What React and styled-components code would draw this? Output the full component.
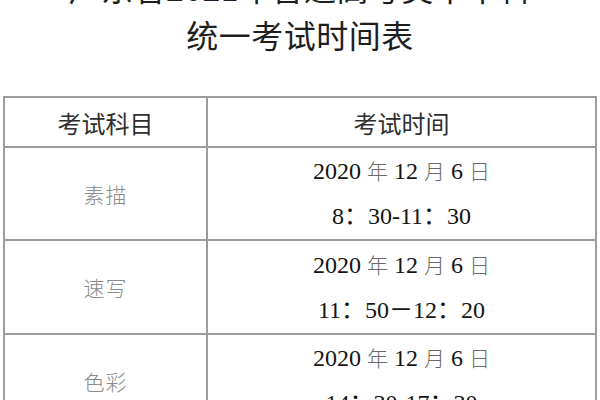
import React from 'react'
import styled, { createGlobalStyle } from 'styled-components'

const GlobalStyle = createGlobalStyle`
  html, body {
    margin: 0;
    padding: 0;
    background: #ffffff;
    overflow: hidden;
  }
  body {
    width: 600px;
    height: 400px;
  }
`

const schedule = [
  { subject: '素描', date: ['2020', '12', '6'], time: '8：30-11：30', height: 93 },
  { subject: '速写', date: ['2020', '12', '6'], time: '11：50－12：20', height: 94 },
  { subject: '色彩', date: ['2020', '12', '6'], time: '14：30-17：30', height: 93 },
]

function DateLine({ parts }) {
  return (
    <Line>
      {parts[0]} <Unit>年</Unit> {parts[1]} <Unit>月</Unit> {parts[2]} <Unit>日</Unit>
    </Line>
  )
}

function App() {
  return (
    <Page>
      <GlobalStyle />
      <Title>
        <div>广东省2021年普通高考美术术科</div>
        <div>统一考试时间表</div>
      </Title>
      <Schedule>
        <thead>
          <tr>
            <HeadCell $first>考试科目</HeadCell>
            <HeadCell>考试时间</HeadCell>
          </tr>
        </thead>
        <tbody>
          {schedule.map((row) => (
            <tr key={row.subject}>
              <SubjectCell $h={row.height}>{row.subject}</SubjectCell>
              <TimeCell $h={row.height}>
                <DateLine parts={row.date} />
                <Line>{row.time}</Line>
              </TimeCell>
            </tr>
          ))}
        </tbody>
      </Schedule>
    </Page>
  )
}

export default App

const Page = styled.div`
  width: 600px;
  height: 400px;
  overflow: hidden;
`

const Title = styled.div`
  margin-top: -36px;
  text-align: center;
  font-family: "Noto Sans CJK SC", "Noto Sans", sans-serif;
  font-size: 32px;
  line-height: 47px;
  color: #1e1e1e;
  letter-spacing: 0.5px;
`

const Schedule = styled.table`
  margin: 38px 0 0 3px;
  width: 594px;
  border-collapse: collapse;
  table-layout: fixed;
  border: 2px solid #9c9c9c;

  td, th {
    border: 2px solid #9c9c9c;
    padding: 0;
    text-align: center;
    vertical-align: middle;
  }
`

const HeadCell = styled.th`
  width: ${(p) => (p.$first ? '201px' : 'auto')};
  height: 48px;
  font-family: "Noto Sans CJK SC", "Noto Sans", sans-serif;
  font-weight: normal;
  font-size: 24px;
  color: #2e2e2e;
`

const SubjectCell = styled.td`
  height: ${(p) => p.$h - 2}px;
  font-family: "Noto Sans CJK SC", sans-serif;
  font-weight: 300;
  font-size: 21px;
  letter-spacing: 1px;
  color: #8a8a8a;
`

const TimeCell = styled.td`
  height: ${(p) => p.$h - 2}px;
  font-family: "Liberation Serif", "Noto Sans CJK SC", serif;
  font-size: 24px;
  color: #141414;
`

const Line = styled.div`
  line-height: 45px;
`

const Unit = styled.span`
  font-family: "Noto Sans CJK SC", sans-serif;
  font-weight: 300;
  font-size: 21px;
  color: #6a6a6a;
`
